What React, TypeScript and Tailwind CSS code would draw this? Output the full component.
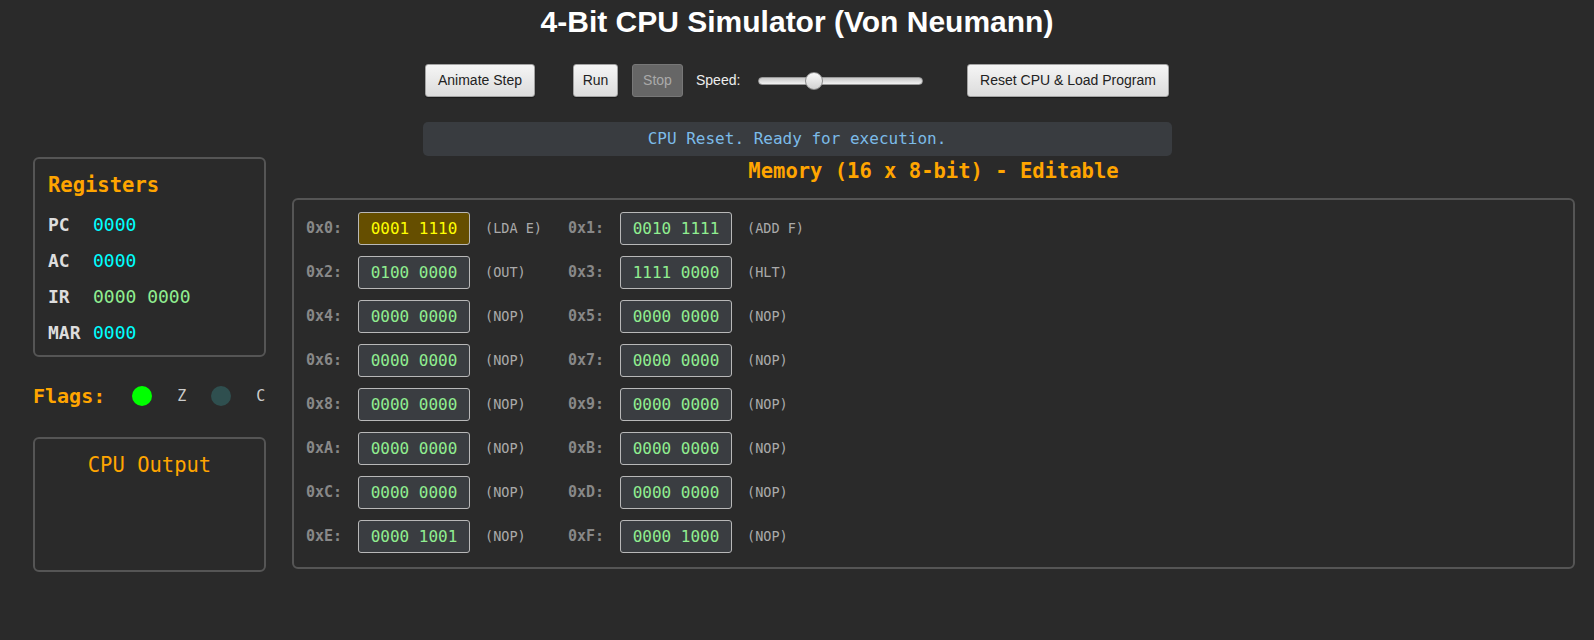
const mono = "font-['DejaVu_Sans_Mono',monospace]";

const memory = [
  { bits: "0001 1110", op: "(LDA E)" },
  { bits: "0010 1111", op: "(ADD F)" },
  { bits: "0100 0000", op: "(OUT)" },
  { bits: "1111 0000", op: "(HLT)" },
  { bits: "0000 0000", op: "(NOP)" },
  { bits: "0000 0000", op: "(NOP)" },
  { bits: "0000 0000", op: "(NOP)" },
  { bits: "0000 0000", op: "(NOP)" },
  { bits: "0000 0000", op: "(NOP)" },
  { bits: "0000 0000", op: "(NOP)" },
  { bits: "0000 0000", op: "(NOP)" },
  { bits: "0000 0000", op: "(NOP)" },
  { bits: "0000 0000", op: "(NOP)" },
  { bits: "0000 0000", op: "(NOP)" },
  { bits: "0000 1001", op: "(NOP)" },
  { bits: "0000 1000", op: "(NOP)" },
];

const registers = [
  { name: "PC", value: "0000", color: "text-[#00ffff]" },
  { name: "AC", value: "0000", color: "text-[#00ffff]" },
  { name: "IR", value: "0000 0000", color: "text-[#90ee90]" },
  { name: "MAR", value: "0000", color: "text-[#00ffff]" },
];

const btn =
  "h-[33px] rounded-[3px] border border-[#a3a3a3] bg-linear-to-b from-[#f5f5f5] to-[#dcdcdc] text-[14px] text-[#222] shadow-[0_1px_1px_rgba(0,0,0,0.4)]";

export default function App() {
  return (
    <div className="min-h-screen w-full bg-[#2a2a2a] font-['Liberation_Sans',Arial,sans-serif] text-white">
      <h1 className="pt-[4px] text-center text-[30px] font-bold leading-[36px] text-white">
        4-Bit CPU Simulator (Von Neumann)
      </h1>

      <div className="mt-[24px] flex items-center justify-center">
        <button className={`${btn} w-[110px]`}>Animate Step</button>
        <button className={`${btn} ml-[38px] w-[45px]`}>Run</button>
        <button className="ml-[14px] h-[33px] w-[51px] rounded-[3px] border border-[#777] bg-[#666] text-[14px] text-[#aaa]">
          Stop
        </button>
        <span className="ml-[13px] w-[46px] text-[14px] text-[#eee]">Speed:</span>
        <div className="relative ml-[16px] h-[8px] w-[165px] rounded-full border border-[#9a9a9a] bg-linear-to-b from-[#c9c9c9] to-[#f2f2f2]">
          <div className="absolute left-[46px] top-1/2 h-[18px] w-[18px] -translate-y-1/2 rounded-full border border-[#8c8c8c] bg-linear-to-b from-[#fafafa] to-[#d2d2d2]" />
        </div>
        <button className={`${btn} ml-[44px] w-[202px]`}>Reset CPU &amp; Load Program</button>
      </div>

      <div
        className={`mx-auto mt-[25px] flex h-[34px] w-[749px] items-center justify-center rounded-[5px] bg-[#393c40] text-[16px] text-[#7cbbe8] ${mono}`}
      >
        CPU Reset. Ready for execution.
      </div>

      <div className={`mt-[1px] flex gap-[26px] pl-[33px] pr-[19px] ${mono}`}>
        {/* left column */}
        <div className="w-[233px] shrink-0">
          <div className="rounded-[6px] border-2 border-[#555] px-[13px] pb-[5px] pt-[14px]">
            <div className="text-[20.5px] font-bold leading-[24px] text-[#ffa500]">Registers</div>
            <div className="mt-[9px]">
              {registers.map((r) => (
                <div key={r.name} className="flex h-[36px] items-center text-[18px]">
                  <span className="w-[45px] font-bold text-[#ddd]">{r.name}</span>
                  <span className={r.color}>{r.value}</span>
                </div>
              ))}
            </div>
          </div>

          <div className="mt-[29px] flex h-[20px] items-center">
            <span className="text-[20px] font-bold text-[#ffa500]">Flags:</span>
            <span className="ml-[27px] h-[20px] w-[20px] rounded-full bg-[#00ff00]" />
            <span className="ml-[25px] text-[15px] text-[#ccc]">Z</span>
            <span className="ml-[25px] h-[20px] w-[20px] rounded-full bg-[#2f4f4f]" />
            <span className="ml-[25px] text-[15px] text-[#ccc]">C</span>
          </div>

          <div className="mt-[31px] h-[135px] rounded-[6px] border-2 border-[#555] pt-[14px]">
            <div className="text-center text-[20.5px] leading-[24px] text-[#ffa500]">CPU Output</div>
          </div>
        </div>

        {/* memory */}
        <div className="flex-1">
          <div className="text-center text-[20.5px] font-bold leading-[28px] text-[#ffa500]">
            Memory (16 x 8-bit) - Editable
          </div>
          <div className="mt-[13px] rounded-[6px] border-2 border-[#555] px-[12px] pb-[14px] pt-[12px]">
            <div className="grid grid-cols-[235px_235px] gap-x-[27px] gap-y-[11px]">
              {memory.map((m, i) => (
                <div key={i} className="flex items-center whitespace-nowrap">
                  <span className="w-[37px] shrink-0 text-[15px] font-bold text-[#888]">
                    0x{i.toString(16).toUpperCase()}:
                  </span>
                  <div
                    className={
                      i === 0
                        ? "ml-[15px] flex h-[33px] w-[112px] shrink-0 items-center justify-center rounded-[3px] border border-[#b8b8b8] bg-[#654e00] text-[16px] text-[#ffff00]"
                        : "ml-[15px] flex h-[33px] w-[112px] shrink-0 items-center justify-center rounded-[3px] border border-[#b8b8b8] bg-[#3a3d41] text-[16px] text-[#90ee90]"
                    }
                  >
                    {m.bits}
                  </div>
                  <span className="ml-[15px] shrink-0 text-[13.5px] text-[#aaa]">{m.op}</span>
                </div>
              ))}
            </div>
          </div>
        </div>
      </div>
    </div>
  );
}
